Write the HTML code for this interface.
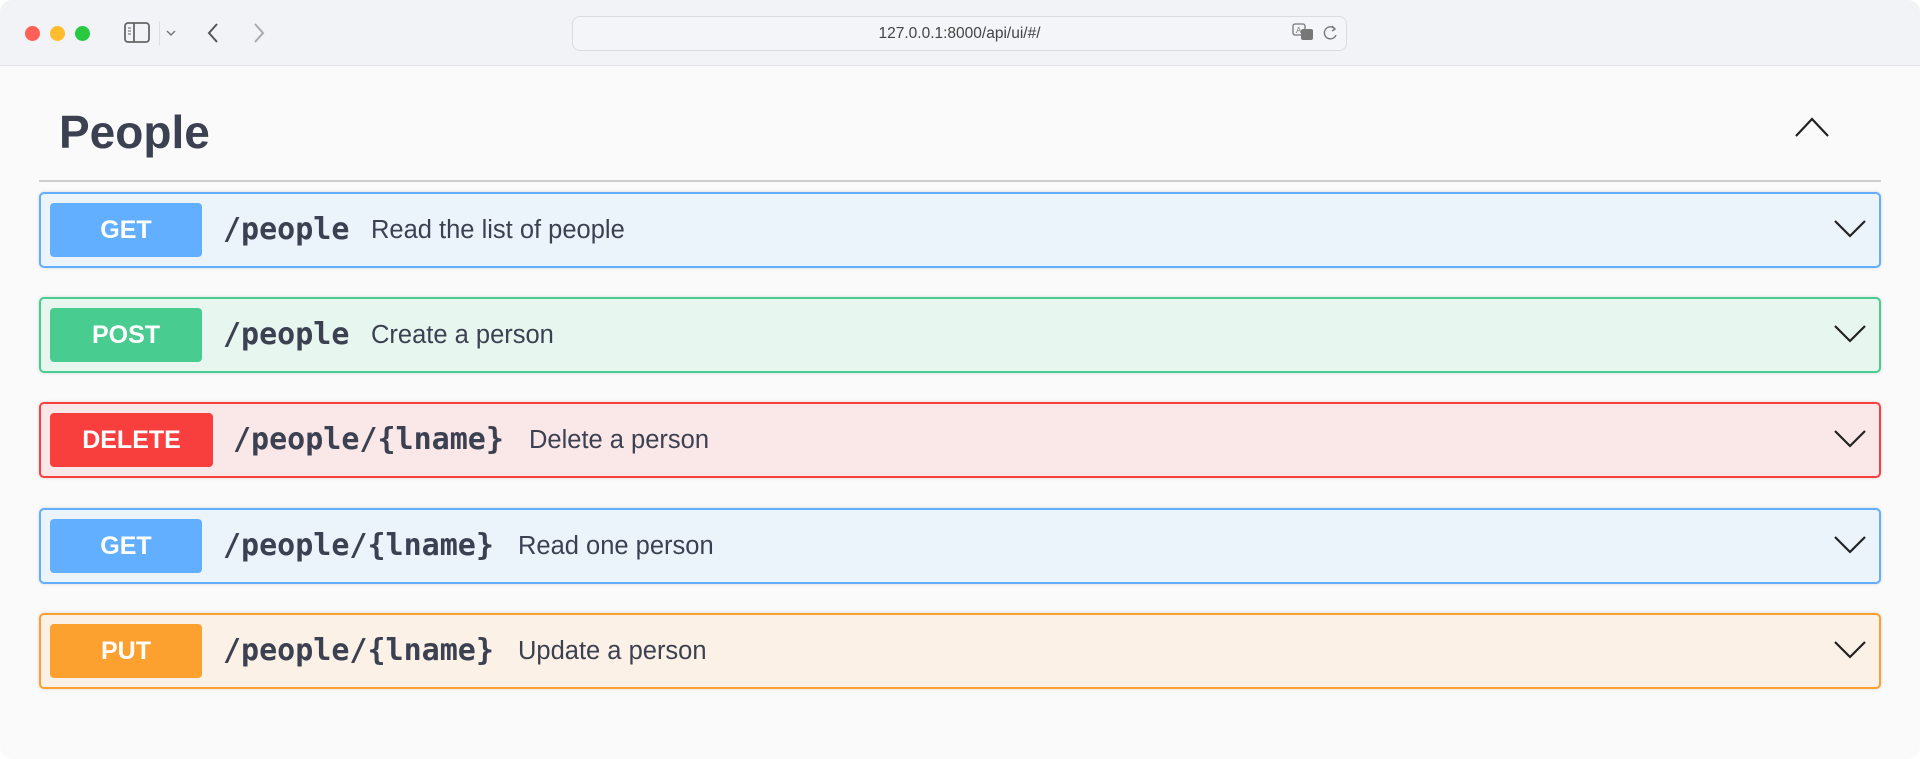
<!DOCTYPE html>
<html><head><meta charset="utf-8"><style>
*{box-sizing:border-box;margin:0;padding:0}
body{width:1920px;height:759px;background:#fff;overflow:hidden;font-family:"Liberation Sans",sans-serif;position:relative}
.win{position:absolute;left:0;top:0;width:1920px;height:759px;border-radius:12px;overflow:hidden;background:#fafafa}
.tb{position:absolute;left:0;top:0;width:1920px;height:66px;background:#f2f3f7;border-bottom:1px solid #e2e2e6}
.dot{position:absolute;top:26px;width:15px;height:15px;border-radius:50%}
.url{position:absolute;left:572px;top:16px;width:775px;height:35px;border:1px solid #dcdce0;border-radius:8px;background:#f4f5f8;text-align:center;font-size:15.5px;line-height:33px;color:#444}
.h{position:absolute;left:59px;top:105px;font-size:46px;font-weight:bold;color:#3b4151}
.div{position:absolute;left:39px;top:180px;width:1842px;height:2px;background:#cfcfd2}
.row{position:absolute;left:39px;width:1842px;height:76px;border:2px solid;border-radius:5px;box-shadow:0 0 3px rgba(0,0,0,.15)}
.b{position:absolute;left:9px;top:9px;height:54px;width:152px;border-radius:4px;color:#fff;font-weight:bold;font-size:25px;text-align:center;line-height:54px}
.p{position:absolute;top:0;line-height:72px;font-family:"DejaVu Sans Mono",monospace;font-weight:bold;font-size:30px;color:#3b4151}
.d{position:absolute;top:0;line-height:72px;font-size:25.5px;color:#3b4151}
.ch{position:absolute;right:12px;top:24px}
</style></head><body><div class="win">
<div class="tb">
<div class="dot" style="left:25px;background:#fe5f57"></div>
<div class="dot" style="left:50px;background:#febc2e"></div>
<div class="dot" style="left:75px;background:#28c840"></div>
<svg style="position:absolute;left:124px;top:22px" width="28" height="22"><rect x="1" y="1" width="24" height="19" rx="3" fill="none" stroke="#666" stroke-width="1.8"/><line x1="10" y1="1" x2="10" y2="20" stroke="#666" stroke-width="1.8"/><line x1="4" y1="6" x2="7" y2="6" stroke="#666"/><line x1="4" y1="9" x2="7" y2="9" stroke="#666"/><line x1="4" y1="12" x2="7" y2="12" stroke="#666"/></svg>
<div style="position:absolute;left:159px;top:21px;width:1px;height:24px;background:#ddd"></div>
<svg style="position:absolute;left:165px;top:28px" width="12" height="10"><path d="M2 3l4 4 4-4" fill="none" stroke="#777" stroke-width="1.5"/></svg>
<svg style="position:absolute;left:206px;top:22px" width="14" height="22"><path d="M11 2L3 11l8 9" fill="none" stroke="#555" stroke-width="2"/></svg>
<svg style="position:absolute;left:252px;top:22px" width="14" height="22"><path d="M3 2l8 9-8 9" fill="none" stroke="#aaa" stroke-width="2"/></svg>
<div class="url">127.0.0.1:8000/api/ui/#/</div>
<svg style="position:absolute;left:1292px;top:23px" width="24" height="20"><rect x="1" y="1" width="12" height="11" rx="2" fill="none" stroke="#777" stroke-width="1.3"/><text x="4" y="10" font-size="8" fill="#777" font-family="Liberation Sans">A</text><rect x="9" y="6" width="12" height="11" rx="2" fill="#777"/></svg>
<svg style="position:absolute;left:1323px;top:23px" width="16" height="20"><path d="M12 6A6 6 0 1 0 13 12" fill="none" stroke="#777" stroke-width="1.4"/><path d="M9 3l3 3-3 2" fill="none" stroke="#777" stroke-width="1.4"/></svg>
</div>
<div class="h">People</div>
<svg style="position:absolute;left:1794px;top:116px" width="36" height="22"><path d="M2 20L18 3l16 17" fill="none" stroke="#222" stroke-width="2.2"/></svg>
<div class="div"></div>

<div class="row" style="top:192px;background:#ebf3fb;border-color:#61affe"><div class="b" style="background:#61affe">GET</div><div class="p" style="left:182px">/people</div><div class="d" style="left:330px">Read the list of people</div><svg class="ch" width="34" height="22"><path d="M2 3l15 15 15-15" fill="none" stroke="#222" stroke-width="2.2"/></svg></div>
<div class="row" style="top:297px;background:#e8f6f0;border-color:#49cc90"><div class="b" style="background:#49cc90">POST</div><div class="p" style="left:182px">/people</div><div class="d" style="left:330px">Create a person</div><svg class="ch" width="34" height="22"><path d="M2 3l15 15 15-15" fill="none" stroke="#222" stroke-width="2.2"/></svg></div>
<div class="row" style="top:402px;background:#fae7e7;border-color:#f93e3e"><div class="b" style="background:#f93e3e;width:163px">DELETE</div><div class="p" style="left:192px">/people/{lname}</div><div class="d" style="left:488px">Delete a person</div><svg class="ch" width="34" height="22"><path d="M2 3l15 15 15-15" fill="none" stroke="#222" stroke-width="2.2"/></svg></div>
<div class="row" style="top:508px;background:#ebf3fb;border-color:#61affe"><div class="b" style="background:#61affe">GET</div><div class="p" style="left:182px">/people/{lname}</div><div class="d" style="left:477px">Read one person</div><svg class="ch" width="34" height="22"><path d="M2 3l15 15 15-15" fill="none" stroke="#222" stroke-width="2.2"/></svg></div>
<div class="row" style="top:613px;background:#fbf1e6;border-color:#fca130"><div class="b" style="background:#fca130">PUT</div><div class="p" style="left:182px">/people/{lname}</div><div class="d" style="left:477px">Update a person</div><svg class="ch" width="34" height="22"><path d="M2 3l15 15 15-15" fill="none" stroke="#222" stroke-width="2.2"/></svg></div>
</div></body></html>
